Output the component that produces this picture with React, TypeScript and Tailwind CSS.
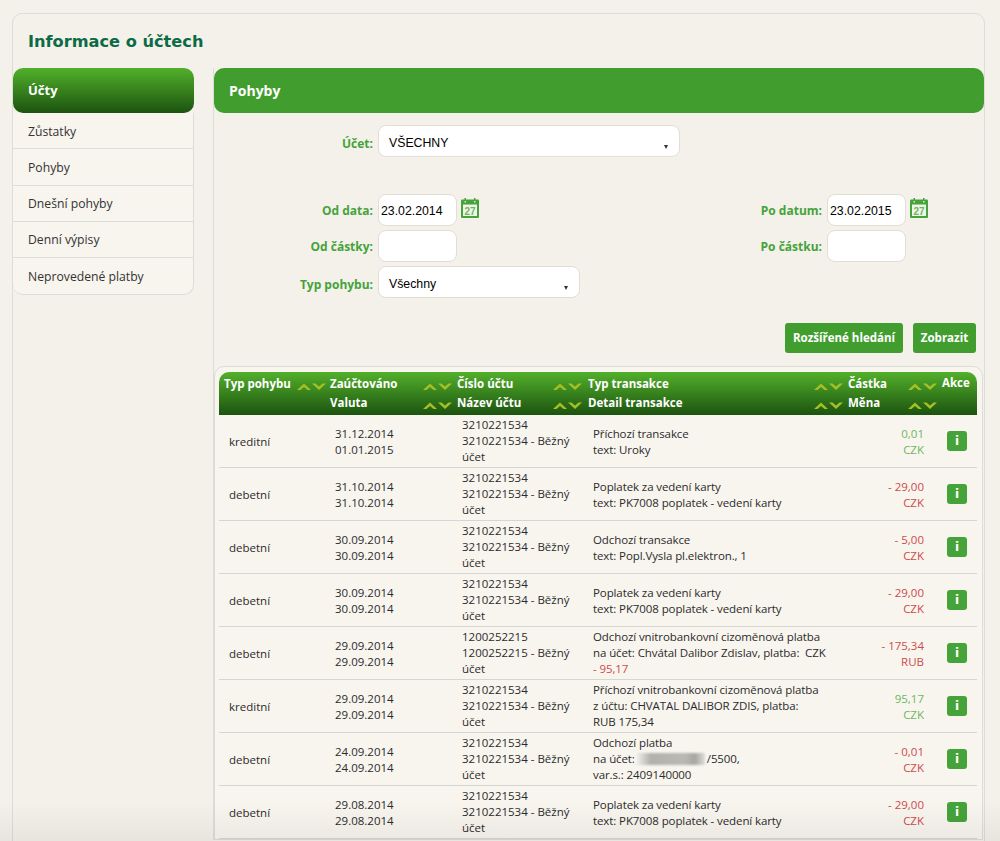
const font = "font-['Open_Sans','Noto_Sans',sans-serif]";

const menu = ["Zůstatky", "Pohyby", "Dnešní pohyby", "Denní výpisy", "Neprovedené platby"];

const rows = [
    { typ: "kreditní", d1: "31.12.2014", d2: "01.01.2015", ucet: "3210221534", det: ["Příchozí transakce", "text: Uroky"], castka: "0,01", mena: "CZK", plus: true },
    { typ: "debetní", d1: "31.10.2014", d2: "31.10.2014", ucet: "3210221534", det: ["Poplatek za vedení karty", "text: PK7008 poplatek - vedení karty"], castka: "- 29,00", mena: "CZK" },
    { typ: "debetní", d1: "30.09.2014", d2: "30.09.2014", ucet: "3210221534", det: ["Odchozí transakce", "text: Popl.Vysla pl.elektron., 1"], castka: "- 5,00", mena: "CZK" },
    { typ: "debetní", d1: "30.09.2014", d2: "30.09.2014", ucet: "3210221534", det: ["Poplatek za vedení karty", "text: PK7008 poplatek - vedení karty"], castka: "- 29,00", mena: "CZK" },
    { typ: "debetní", d1: "29.09.2014", d2: "29.09.2014", ucet: "1200252215", det: ["Odchozí vnitrobankovní cizoměnová platba", "na účet: Chvátal Dalibor Zdislav, platba:\u00a0 CZK"], red: "- 95,17", castka: "- 175,34", mena: "RUB" },
    { typ: "kreditní", d1: "29.09.2014", d2: "29.09.2014", ucet: "3210221534", det: ["Příchozí vnitrobankovní cizoměnová platba", "z účtu: CHVATAL DALIBOR ZDIS, platba:", "RUB 175,34"], castka: "95,17", mena: "CZK", plus: true },
    { typ: "debetní", d1: "24.09.2014", d2: "24.09.2014", ucet: "3210221534", det: ["Odchozí platba"], blur: true, castka: "- 0,01", mena: "CZK" },
    { typ: "debetní", d1: "29.08.2014", d2: "29.08.2014", ucet: "3210221534", det: ["Poplatek za vedení karty", "text: PK7008 poplatek - vedení karty"], castka: "- 29,00", mena: "CZK" },
];

const Calendar = () => (
    <svg width="18" height="20" viewBox="0 0 18 20" className="mb-[4px] ml-[4px] shrink-0">
        <rect x="0" y="1.5" width="18" height="18.5" rx="1" fill="#45a33a" />
        <rect x="3.5" y="0" width="1.5" height="4" fill="#45a33a" />
        <rect x="13" y="0" width="1.5" height="4" fill="#45a33a" />
        <rect x="3.5" y="3" width="1.5" height="1.5" fill="#d7e8ce" />
        <rect x="13" y="3" width="1.5" height="1.5" fill="#d7e8ce" />
        <rect x="2" y="6.5" width="14" height="11.5" fill="#eef5e8" />
        <text x="9" y="16.5" textAnchor="middle" fontSize="10" fontWeight="700" fill="#6fb55f" fontFamily="Liberation Sans">27</text>
    </svg>
);

// dvojice sipek razeni
const Arrows = () => (
    <svg width="29" height="8" viewBox="0 0 29 8" className="mt-[5px] shrink-0">
        <path d="M0 7 L7 0.5 L14 7 L10.5 7 L7 4 L3.5 7 Z" fill="#a5bf24" />
        <path d="M15 0.5 L18.5 0.5 L22 3.5 L25.5 0.5 L29 0.5 L22 7 Z" fill="#a5bf24" />
    </svg>
);

const HeadCell = ({ w, top, bottom }: { w: string; top: string; bottom?: string }) => (
    <div className={`${w} flex flex-col gap-[3px]`}>
        {[top, bottom].map((t, i) => (
            <div key={i} className="flex h-[16px] items-center justify-between whitespace-nowrap">
                <span>{t}</span>
                {(i === 0 || bottom) && <Arrows />}
            </div>
        ))}
    </div>
);

const Field = ({ label, value, w = "w-[79px]", labelW, select, calendar }: { label: string; value?: string; w?: string; labelW: string; select?: boolean; calendar?: boolean }) => (
    <div className="flex h-[32px] items-center">
        <label className={`${labelW} pr-[5px] text-right text-[12px] font-bold text-[#45a33a] ${select ? "pt-[5px]" : "pt-[2px]"}`}>{label}</label>
        <div className={`${w} relative flex h-[32px] items-center rounded-[8px] border border-[#e2ded4] bg-white text-[12.3px] text-black font-['Liberation_Sans',sans-serif] ${select ? "pl-[10px] pt-[5px]" : "pl-[2px] pt-[3px]"}`}>
            {value}
            {select && <span className="absolute right-[11px] bottom-[7px] h-0 w-0 border-x-[2.5px] border-t-[4px] border-x-transparent border-t-[#333]" />}
        </div>
        {calendar && <Calendar />}
    </div>
);

const Row = ({ r }: { r: (typeof rows)[number] }) => (
    <div className="flex h-[53px] items-center border-b border-[#d5d5d3] pt-[1px] text-[11.5px] leading-[16px] text-[#2b2b2b]">
        <div className="w-[106px] pl-[10px]">{r.typ}</div>
        <div className="w-[127px] pl-[10px]">
            <div>{r.d1}</div>
            <div>{r.d2}</div>
        </div>
        <div className="-mt-[1px] w-[131px] pl-[10px] pr-[8px]">
            <div>{r.ucet}</div>
            <div>{r.ucet} - Běžný účet</div>
        </div>
        <div className={`w-[260px] pl-[10px] pr-[10px] tracking-[-0.1px] ${r.red || r.blur || r.det.length === 3 ? "-mt-[1px]" : ""}`}>
            {r.det.map((d) => (
                <div key={d}>{d}</div>
            ))}
            {r.red && <div className="text-[#cf4a4a]">{r.red}</div>}
            {r.blur && (
                <>
                    <div className="flex items-center">
                        na účet:
                        <span className="mx-[2px] h-[12px] w-[68px] bg-[linear-gradient(90deg,#f0eee9,#b3b1ad_20%,#bbb9b5_70%,#a8a6a2_85%,#ddd)] blur-[1px]" />
                        /5500,
                    </div>
                    <div>var.s.: 2409140000</div>
                </>
            )}
        </div>
        <div className={`w-[94px] pr-[13px] text-right ${r.plus ? "text-[#6fb55f]" : "text-[#cf4a4a]"}`}>
            <div>{r.castka}</div>
            <div>{r.mena}</div>
        </div>
        <div className="-mt-[1px] pl-[10px]">
            <div className="flex h-[20px] w-[20px] items-center justify-center rounded-[3px] bg-[#45a33a] text-[12px] font-bold text-white font-['DejaVu_Sans',sans-serif]">i</div>
        </div>
    </div>
);

export default function App() {
    return (
        <div className={`${font} relative h-[841px] w-[1000px] overflow-hidden bg-[#f4f1ea]`}>
            <div className="ml-[12px] mt-[13px] h-[900px] w-[973px] rounded-t-[10px] border border-[#dcdcd8]">
                <h1 className="pl-[15px] pt-[16px] text-[16.2px] leading-[24px] font-bold text-[#0b6b46] font-['DejaVu_Sans',sans-serif]">Informace o účtech</h1>

                <div className="mt-[14px] flex">
                    {/* levy panel */}
                    <aside className="w-[181px] shrink-0 self-start">
                        <div className="flex h-[45px] items-center rounded-[10px] bg-[linear-gradient(#52b02b,#1c5310)] pl-[15px] text-[13px] font-bold text-white">Účty</div>
                        <ul className="rounded-b-[10px] border-r border-b border-[#dcdcd8] bg-[#f8f5ef] text-[12.2px] text-[#333]">
                            {menu.map((m) => (
                                <li key={m} className="flex h-[36.3px] items-center border-b border-[#dcdcd8] pl-[15px] pt-[2px] last:border-b-0">{m}</li>
                            ))}
                        </ul>
                    </aside>

                    {/* obsah */}
                    <main className="ml-[19px] flex-1 border-l border-[#dcdcd8]">
                        <div className="flex h-[45px] items-center rounded-[10px] bg-[#419e2e] pl-[15px] text-[14px] font-bold text-white">Pohyby</div>

                        <div className="mt-[12px] flex flex-col">
                            <Field label="Účet:" value="VŠECHNY" labelW="w-[164px]" w="w-[302px]" select />
                            <div className="mt-[37px] flex justify-between pr-[56px]">
                                <div className="flex flex-col gap-[4px]">
                                    <Field label="Od data:" value="23.02.2014" labelW="w-[164px]" calendar />
                                    <Field label="Od částky:" labelW="w-[164px]" />
                                    <Field label="Typ pohybu:" value="Všechny" labelW="w-[164px]" w="w-[202px]" select />
                                </div>
                                <div className="flex flex-col gap-[4px]">
                                    <Field label="Po datum:" value="23.02.2015" labelW="w-[100px]" calendar />
                                    <Field label="Po částku:" labelW="w-[100px]" />
                                </div>
                            </div>
                        </div>

                        <div className="mt-[25px] flex justify-end gap-[10px] pr-[8px] text-[11.5px] font-bold text-white">
                            <button className="h-[30px] w-[118px] rounded-[3px] bg-[#419e2e]">Rozšířené hledání</button>
                            <button className="h-[30px] w-[63px] rounded-[3px] bg-[#419e2e]">Zobrazit</button>
                        </div>

                        <section className="mt-[13px] w-[769px] rounded-t-[10px] border border-[#dcdcd8] bg-[#f8f5ef] pl-[4px] pr-[5px] pt-[5px]">
                            <div className="flex h-[43px] rounded-t-[10px] bg-[linear-gradient(#52b02b,#1c5310)] pt-[4px] text-[11.5px] font-bold text-white">
                                <div className="pl-[5px]">
                                    <HeadCell w="w-[102px]" top="Typ pohybu" />
                                </div>
                                <div className="pl-[4px]">
                                    <HeadCell w="w-[122px]" top="Zaúčtováno" bottom="Valuta" />
                                </div>
                                <div className="pl-[5px]">
                                    <HeadCell w="w-[125px]" top="Číslo účtu" bottom="Název účtu" />
                                </div>
                                <div className="pl-[6px]">
                                    <HeadCell w="w-[255px]" top="Typ transakce" bottom="Detail transakce" />
                                </div>
                                <div className="pl-[5px]">
                                    <HeadCell w="w-[89px]" top="Částka" bottom="Měna" />
                                </div>
                                <div className="-mt-[2px] pl-[5px]">Akce</div>
                            </div>
                            {rows.map((r, i) => (
                                <Row key={i} r={r} />
                            ))}
                        </section>
                    </main>
                </div>
            </div>
            <div className="pointer-events-none absolute inset-x-0 bottom-0 h-[40px] bg-[linear-gradient(transparent,rgba(0,0,0,0.05))]" />
        </div>
    );
}
